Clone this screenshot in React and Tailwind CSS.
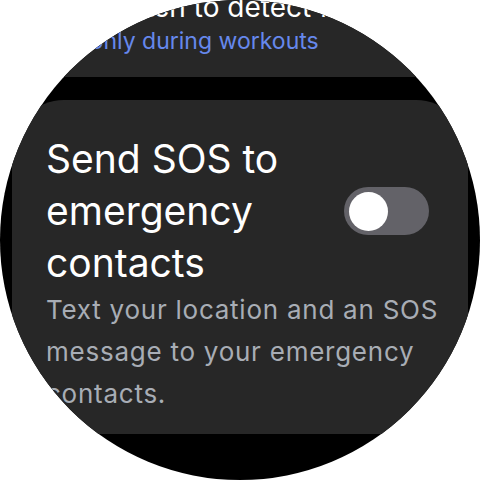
import React, { useState } from "react";

function Toggle({ on, onChange }) {
  return (
    <button
      onClick={() => onChange(!on)}
      className={`mr-[15px] flex h-[48px] w-[85px] shrink-0 items-center rounded-full px-[5px] ${
        on ? "justify-end bg-[#a8c7fa]" : "justify-start bg-[#636268]"
      }`}
    >
      <span className="block h-[39px] w-[39px] rounded-full bg-white" />
    </button>
  );
}

export default function App() {
  const [sos, setSos] = useState(false);

  return (
    <div className="h-[480px] w-[480px] bg-white" style={{ fontFamily: "Inter, Roboto, sans-serif" }}>
      <div className="h-[480px] w-[480px] overflow-hidden rounded-full bg-black">
        <div className="-mt-[40px] flex flex-col gap-[23px] px-[12px]">
          {/* fall detection card, scrolled mostly out of view */}
          <div className="rounded-[52px] bg-[#272727] pb-[19px] pl-[34px] pr-[30px] pt-[30px]">
            <p className="whitespace-nowrap text-[28px] leading-[34px] text-white">
              Use watch to detect falls
            </p>
            <p className="whitespace-nowrap pl-[6px] text-[23px] leading-[34px] text-[#6688ec]">
              On only during workouts
            </p>
          </div>

          <div className="rounded-[52px] bg-[#272727] pb-[19px] pl-[34px] pr-[24px] pt-[33px]">
            <div className="flex items-center justify-between gap-4">
              <h2 className="text-[39px] leading-[52px] text-white">
                Send SOS to
                <br />
                emergency
                <br />
                contacts
              </h2>
              <Toggle on={sos} onChange={setSos} />
            </div>
            <p className="whitespace-nowrap text-[26px] leading-[42px] tracking-[0.75px] text-[#a8adb5]">
              Text your location and an SOS
              <br />
              message to your emergency
              <br />
              contacts.
            </p>
          </div>
        </div>
      </div>
    </div>
  );
}
